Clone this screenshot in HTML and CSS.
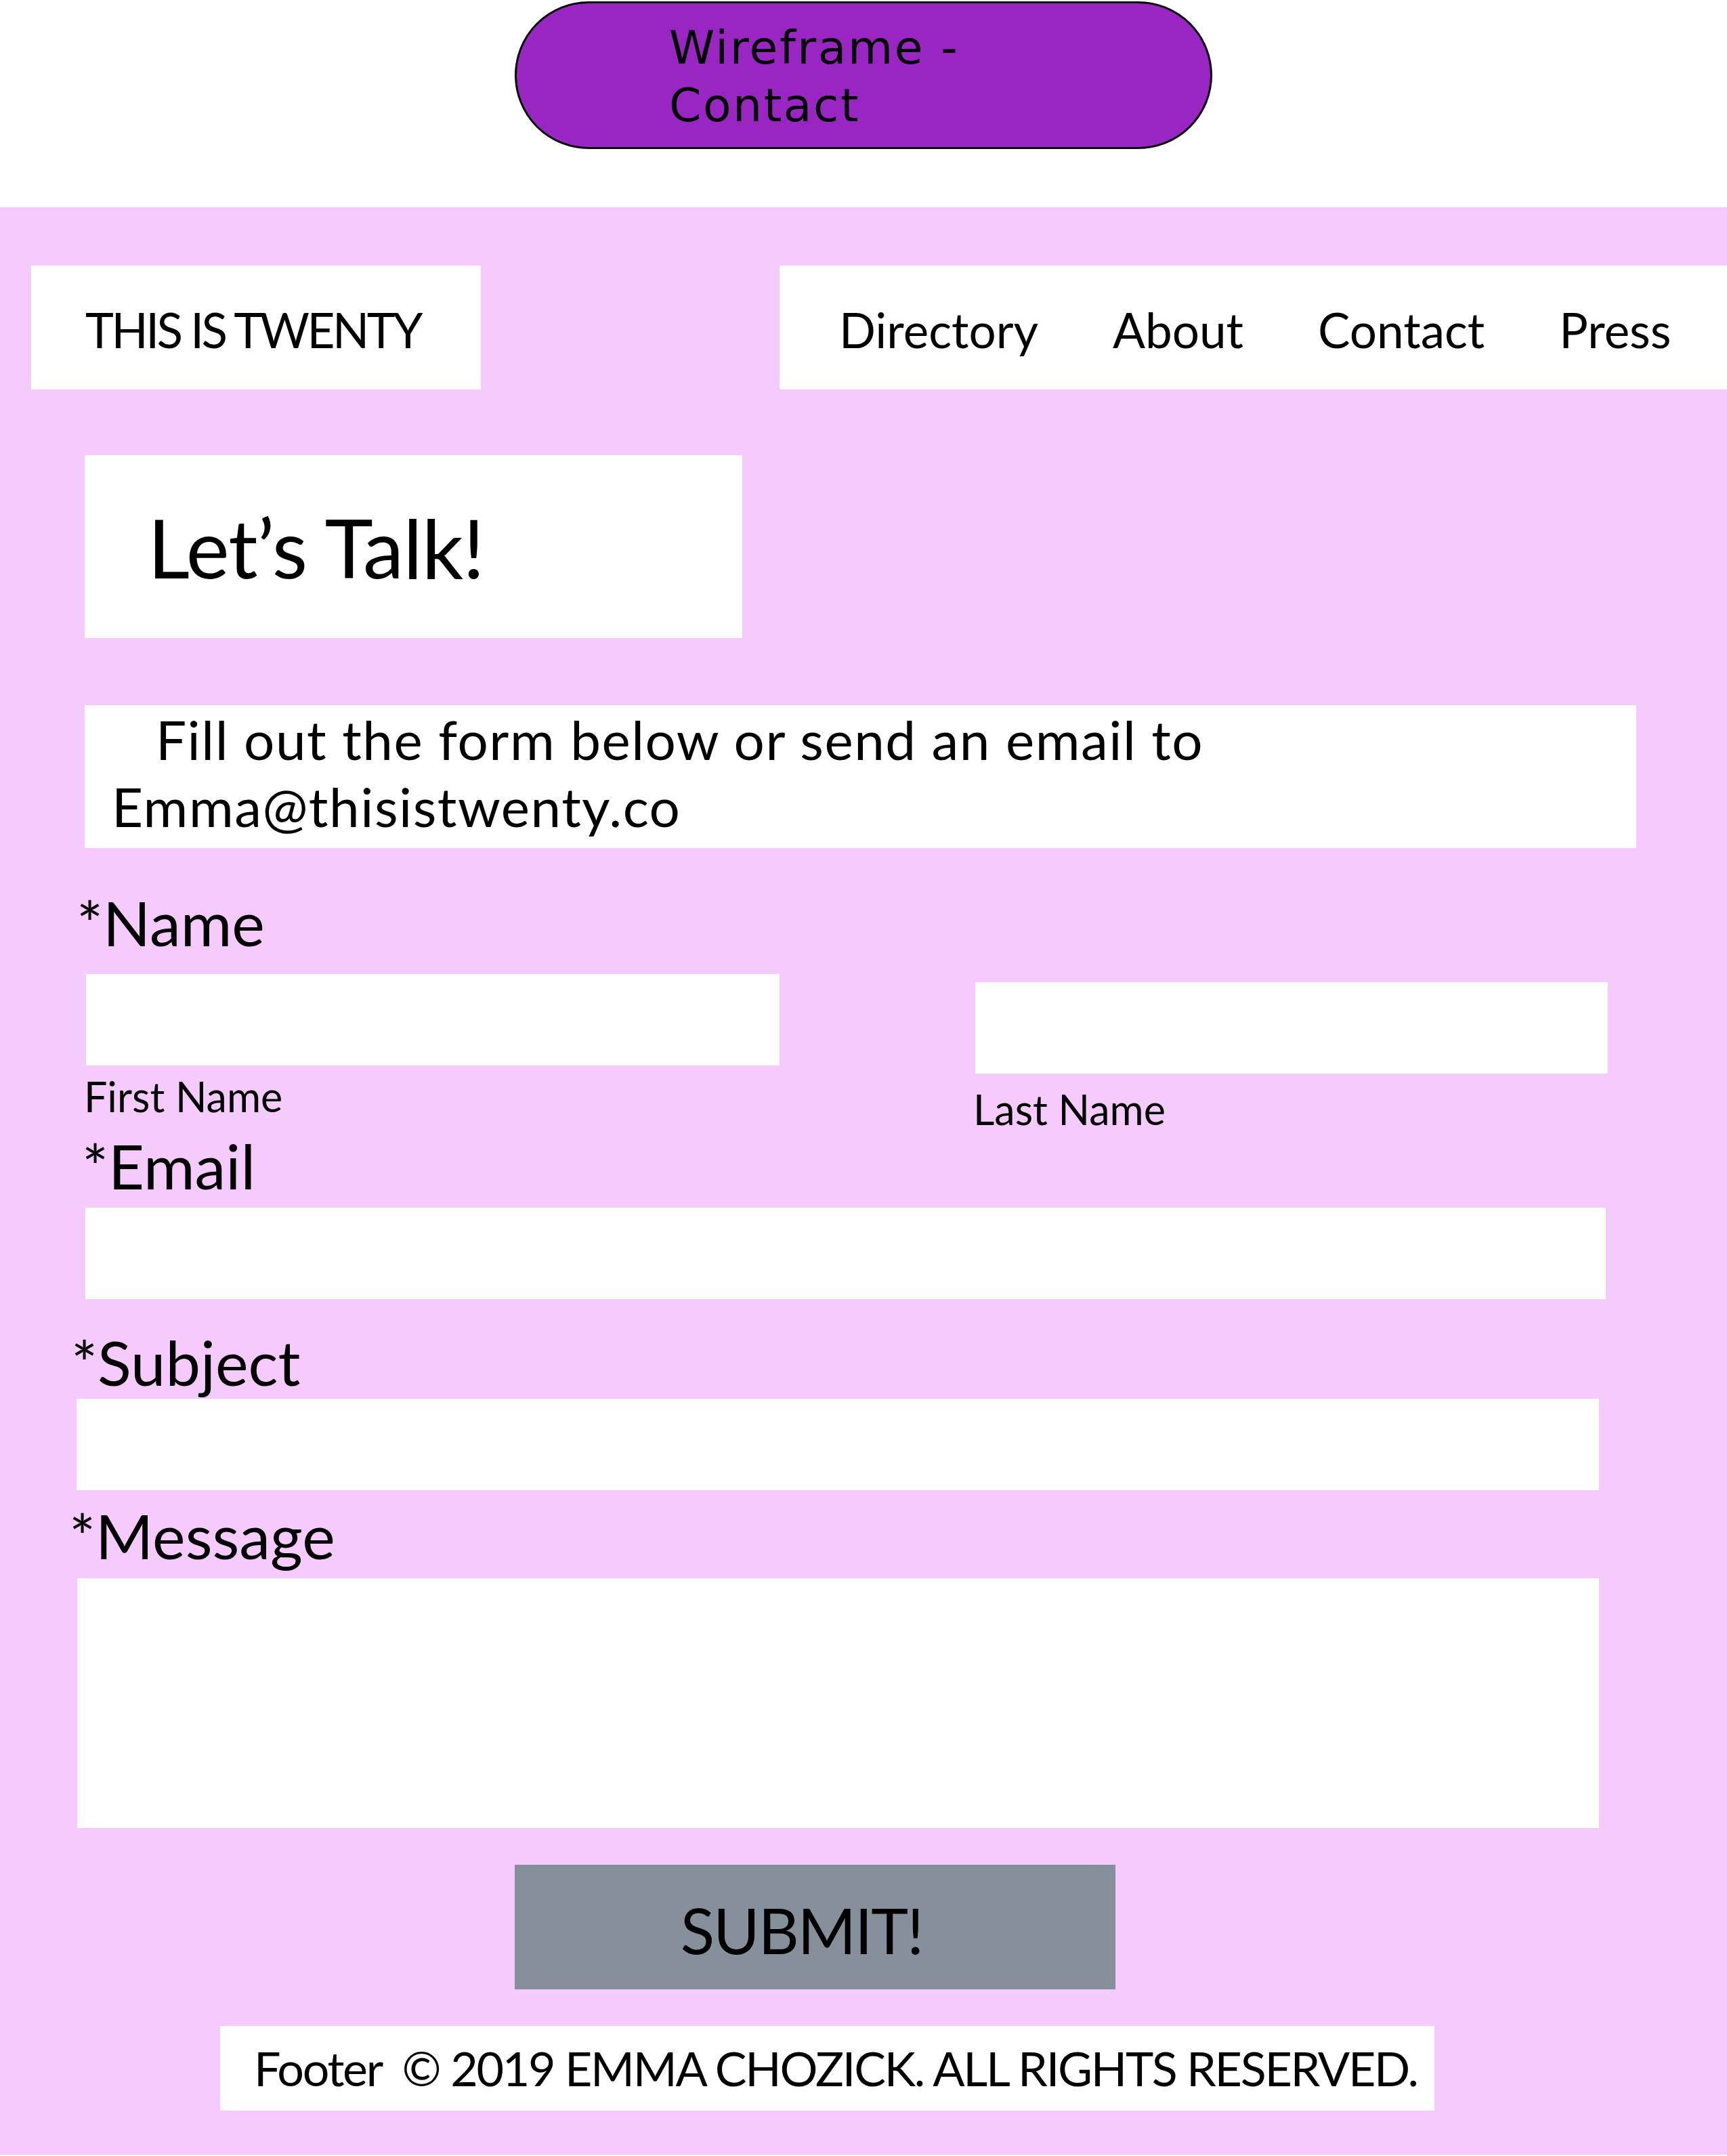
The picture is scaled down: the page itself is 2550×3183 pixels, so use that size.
FILE: index.html
```html
<!DOCTYPE html>
<html lang="en">
<head>
<meta charset="utf-8">
<title>Wireframe - Contact</title>
<link rel="stylesheet" href="styles.css">
</head>
<body>
<header class="top">
  <div class="pill"><span class="pill-line">Wireframe -</span><span class="pill-line">Contact</span></div>
</header>
<main class="page">
  <nav class="topbar">
    <div class="brand">THIS IS TWENTY</div>
    <ul class="menu">
      <li>Directory</li>
      <li>About</li>
      <li>Contact</li>
      <li>Press</li>
    </ul>
  </nav>
  <h1 class="hero">Let’s Talk!</h1>
  <p class="intro"><span class="intro-first">Fill out the form below or send an email to</span><br>Emma@thisistwenty.co</p>
  <form class="form">
    <label class="label label-name">*Name</label>
    <div class="name-row">
      <div class="name-col name-first">
        <input class="field field-first" type="text">
        <span class="sub">First Name</span>
      </div>
      <div class="name-col name-last">
        <input class="field field-last" type="text">
        <span class="sub">Last Name</span>
      </div>
    </div>
    <label class="label label-email">*Email</label>
    <input class="field field-email" type="email">
    <label class="label label-subject">*Subject</label>
    <input class="field field-subject" type="text">
    <label class="label label-message">*Message</label>
    <textarea class="field field-message"></textarea>
    <button class="submit" type="button">SUBMIT!</button>
  </form>
  <footer class="footer">Footer &nbsp;© 2019 EMMA CHOZICK. ALL RIGHTS RESERVED.</footer>
</main>
</body>
</html>
```

FILE: styles.css
```css
* { box-sizing: border-box; }

body {
  margin: 0;
  font-family: Lato, "Open Sans", sans-serif;
  color: #000;
  background: #fff;
}

.top {
  height: 306px;
  padding-top: 2px;
  background: #fff;
}

.pill {
  margin-left: 760px;
  width: 1030px;
  height: 218px;
  border: 3px solid #000;
  border-radius: 109px;
  background: #9925c2;
  padding: 23px 0 0 225px;
  font-family: "DejaVu Sans", sans-serif;
  font-size: 68px;
  line-height: 85px;
  letter-spacing: 2.5px;
}

.pill-line { display: block; }

.page {
  background: #f5cafd;
  padding: 86px 0 65px;
  display: flex;
  flex-direction: column;
  align-items: flex-start;
}

.topbar {
  display: flex;
  width: 100%;
  height: 183px;
}

.brand {
  margin-left: 46px;
  width: 664px;
  background: #fff;
  display: flex;
  align-items: center;
  padding-left: 80px;
  padding-top: 6px;
  font-size: 71px;
  letter-spacing: -3.5px;
}

.menu {
  flex: 1;
  margin: 0 0 0 441px;
  padding: 6px 0 0 88px;
  list-style: none;
  background: #fff;
  display: flex;
  align-items: center;
  gap: 110px;
  font-size: 71px;
}

.hero {
  margin: 97px 0 0 125px;
  width: 971px;
  height: 270px;
  background: #fff;
  display: flex;
  align-items: center;
  padding-left: 93px;
  font-size: 121px;
  font-weight: 400;
  letter-spacing: -1px;
}

.intro {
  margin: 99px 0 0 125px;
  width: 2291px;
  height: 211px;
  background: #fff;
  padding: 1px 0 0 40px;
  font-size: 80px;
  line-height: 99px;
  letter-spacing: 1.5px;
}

.intro-first { padding-left: 65px; }

.form {
  display: flex;
  flex-direction: column;
  align-items: flex-start;
  width: 100%;
}

.label {
  display: block;
  font-size: 92px;
  line-height: 90px;
}

.label-name { margin: 60px 0 0 113px; line-height: 100px; }
.label-email { margin: 8px 0 0 121px; }
.label-subject { margin: 48px 0 0 105px; }
.label-message { margin: 22px 0 0 102px; }

.field {
  display: block;
  border: 0;
  outline: 0;
  padding: 0;
  margin: 0;
  background: #fff;
  font: inherit;
}

.name-row {
  display: flex;
  align-items: flex-start;
  margin-top: 26px;
  width: 100%;
}

.name-col {
  display: flex;
  flex-direction: column;
  align-items: flex-start;
}

.name-first { margin-left: 127px; }
.name-last { margin-left: 289px; margin-top: 12px; }

.field-first { width: 1024px; height: 135px; }
.field-last { width: 934px; height: 135px; }

.sub {
  font-size: 61px;
  line-height: 60px;
}

.name-first .sub { margin: 16px 0 0 -3px; }
.name-last .sub { margin: 23px 0 0 -3px; }

.field-email {
  margin: 17px 0 0 126px;
  width: 2245px;
  height: 135px;
}

.field-subject {
  margin: 9px 0 0 113px;
  width: 2248px;
  height: 135px;
}

.field-message {
  margin: 18px 0 0 114px;
  width: 2247px;
  height: 369px;
  resize: none;
}

.submit {
  margin: 54px 0 0 760px;
  width: 887px;
  height: 184px;
  border: 0;
  background: #85909a;
  color: #000;
  font-family: Lato, "Open Sans", sans-serif;
  font-size: 93px;
  letter-spacing: -2px;
  padding: 8px 40px 0 0;
  display: flex;
  align-items: center;
  justify-content: center;
}

.footer {
  margin: 54px 0 0 325px;
  width: 1793px;
  height: 125px;
  background: #fff;
  padding-left: 50px;
  font-size: 70px;
  letter-spacing: -2.3px;
  line-height: 125px;
  white-space: nowrap;
}
```
